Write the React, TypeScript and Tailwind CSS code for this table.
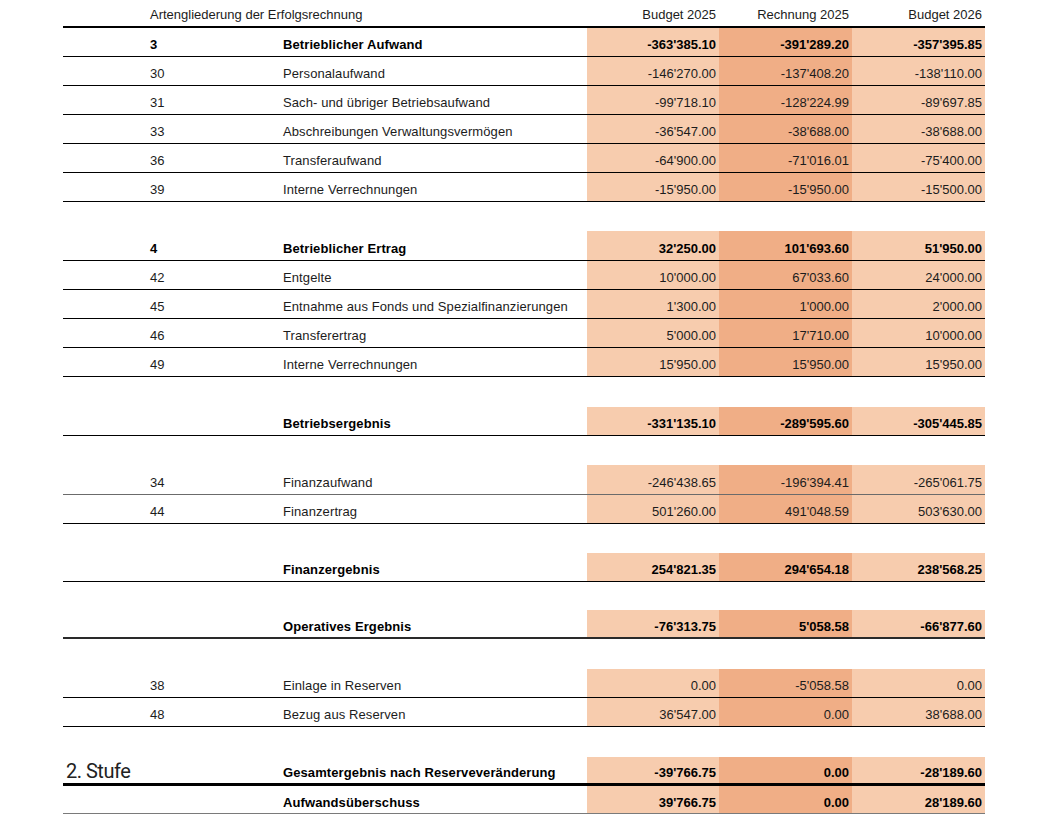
import React from 'react';

type Row =
  | { kind: 'gap'; h: number }
  | {
      kind: 'data';
      h: number;
      code?: string;
      label: string;
      values: [string, string, string];
      bold?: boolean;
      line: string;
      stage?: string;
    };

const rows: Row[] = [
  { kind: 'data', h: 29, code: '3', label: 'Betrieblicher Aufwand', values: ["-363'385.10", "-391'289.20", "-357'395.85"], bold: true, line: 'border-b border-black' },
  { kind: 'data', h: 29, code: '30', label: 'Personalaufwand', values: ["-146'270.00", "-137'408.20", "-138'110.00"], line: 'border-b border-black' },
  { kind: 'data', h: 29, code: '31', label: 'Sach- und übriger Betriebsaufwand', values: ["-99'718.10", "-128'224.99", "-89'697.85"], line: 'border-b border-black' },
  { kind: 'data', h: 29, code: '33', label: 'Abschreibungen Verwaltungsvermögen', values: ["-36'547.00", "-38'688.00", "-38'688.00"], line: 'border-b border-black' },
  { kind: 'data', h: 29, code: '36', label: 'Transferaufwand', values: ["-64'900.00", "-71'016.01", "-75'400.00"], line: 'border-b border-black' },
  { kind: 'data', h: 29, code: '39', label: 'Interne Verrechnungen', values: ["-15'950.00", "-15'950.00", "-15'500.00"], line: 'border-b border-black' },
  { kind: 'gap', h: 29 },
  { kind: 'data', h: 30, code: '4', label: 'Betrieblicher Ertrag', values: ["32'250.00", "101'693.60", "51'950.00"], bold: true, line: 'border-b border-black' },
  { kind: 'data', h: 29, code: '42', label: 'Entgelte', values: ["10'000.00", "67'033.60", "24'000.00"], line: 'border-b border-black' },
  { kind: 'data', h: 29, code: '45', label: 'Entnahme aus Fonds und Spezialfinanzierungen', values: ["1'300.00", "1'000.00", "2'000.00"], line: 'border-b border-black' },
  { kind: 'data', h: 29, code: '46', label: 'Transferertrag', values: ["5'000.00", "17'710.00", "10'000.00"], line: 'border-b border-black' },
  { kind: 'data', h: 29, code: '49', label: 'Interne Verrechnungen', values: ["15'950.00", "15'950.00", "15'950.00"], line: 'border-b border-black' },
  { kind: 'gap', h: 30 },
  { kind: 'data', h: 29, label: 'Betriebsergebnis', values: ["-331'135.10", "-289'595.60", "-305'445.85"], bold: true, line: 'border-b border-black' },
  { kind: 'gap', h: 29 },
  { kind: 'data', h: 30, code: '34', label: 'Finanzaufwand', values: ["-246'438.65", "-196'394.41", "-265'061.75"], line: 'border-b border-[#6b6b6b]' },
  { kind: 'data', h: 29, code: '44', label: 'Finanzertrag', values: ["501'260.00", "491'048.59", "503'630.00"], line: 'border-b border-black' },
  { kind: 'gap', h: 29 },
  { kind: 'data', h: 29, label: 'Finanzergebnis', values: ["254'821.35", "294'654.18", "238'568.25"], bold: true, line: 'border-b border-black' },
  { kind: 'gap', h: 28 },
  { kind: 'data', h: 29, label: 'Operatives Ergebnis', values: ["-76'313.75", "5'058.58", "-66'877.60"], bold: true, line: 'border-b-2 border-[#2a2a2a]' },
  { kind: 'gap', h: 30 },
  { kind: 'data', h: 29, code: '38', label: 'Einlage in Reserven', values: ['0.00', "-5'058.58", '0.00'], line: 'border-b border-black' },
  { kind: 'data', h: 29, code: '48', label: 'Bezug aus Reserven', values: ["36'547.00", '0.00', "38'688.00"], line: 'border-b border-black' },
  { kind: 'gap', h: 30 },
  { kind: 'data', h: 29, label: 'Gesamtergebnis nach Reserveveränderung', values: ["-39'766.75", '0.00', "-28'189.60"], bold: true, line: 'border-b-[3px] border-black', stage: '2. Stufe' },
  { kind: 'data', h: 28, label: 'Aufwandsüberschuss', values: ["39'766.75", '0.00', "28'189.60"], bold: true, line: 'border-b border-[#7a7a7a]' },
];

const colBg = ['bg-[#f7ccae]', 'bg-[#f0ae86]', 'bg-[#f7ccae]'];
const colW = ['w-[132px]', 'w-[133px]', 'w-[133px]'];

export default function App() {
  return (
    <div className="w-[1038px] h-[832px] bg-white font-['Liberation_Sans',Arial,sans-serif] text-[13px] text-[#1c1c1c]">
      <div className="ml-[63px] w-[922px]">
        {/* Header */}
        <div className="flex items-center h-[28px] pt-[3px] border-b-2 border-black">
          <div className="w-[87px]" />
          <div className="w-[437px]">Artengliederung der Erfolgsrechnung</div>
          {['Budget 2025', 'Rechnung 2025', 'Budget 2026'].map((h, i) => (
            <div key={h} className={`${colW[i]} text-right pr-[3px]`}>
              {h}
            </div>
          ))}
        </div>

        {rows.map((r, idx) =>
          r.kind === 'gap' ? (
            <div key={`gap-${idx}`} style={{ height: r.h }} />
          ) : (
            <div
              key={`row-${idx}`}
              style={{ height: r.h }}
              className={`flex box-border ${r.line} ${r.bold ? 'font-bold text-black' : ''}`}
            >
              <div className="w-[87px] flex items-end pl-[3px] pb-[2px]">
                {r.stage && (
                  <span className="font-['Roboto',sans-serif] font-normal text-[20px] leading-none text-[#222] tracking-[-0.5px]">
                    {r.stage}
                  </span>
                )}
              </div>
              <div className="w-[133px] flex items-center pt-[6px]">{r.code}</div>
              <div className="w-[304px] flex items-center pt-[6px] whitespace-nowrap tracking-[0.1px]">{r.label}</div>
              {r.values.map((v, i) => (
                <div key={i} className={`${colW[i]} ${colBg[i]} flex items-center justify-end pr-[3px] pt-[6px]`}>
                  {v}
                </div>
              ))}
            </div>
          ),
        )}
      </div>
    </div>
  );
}
